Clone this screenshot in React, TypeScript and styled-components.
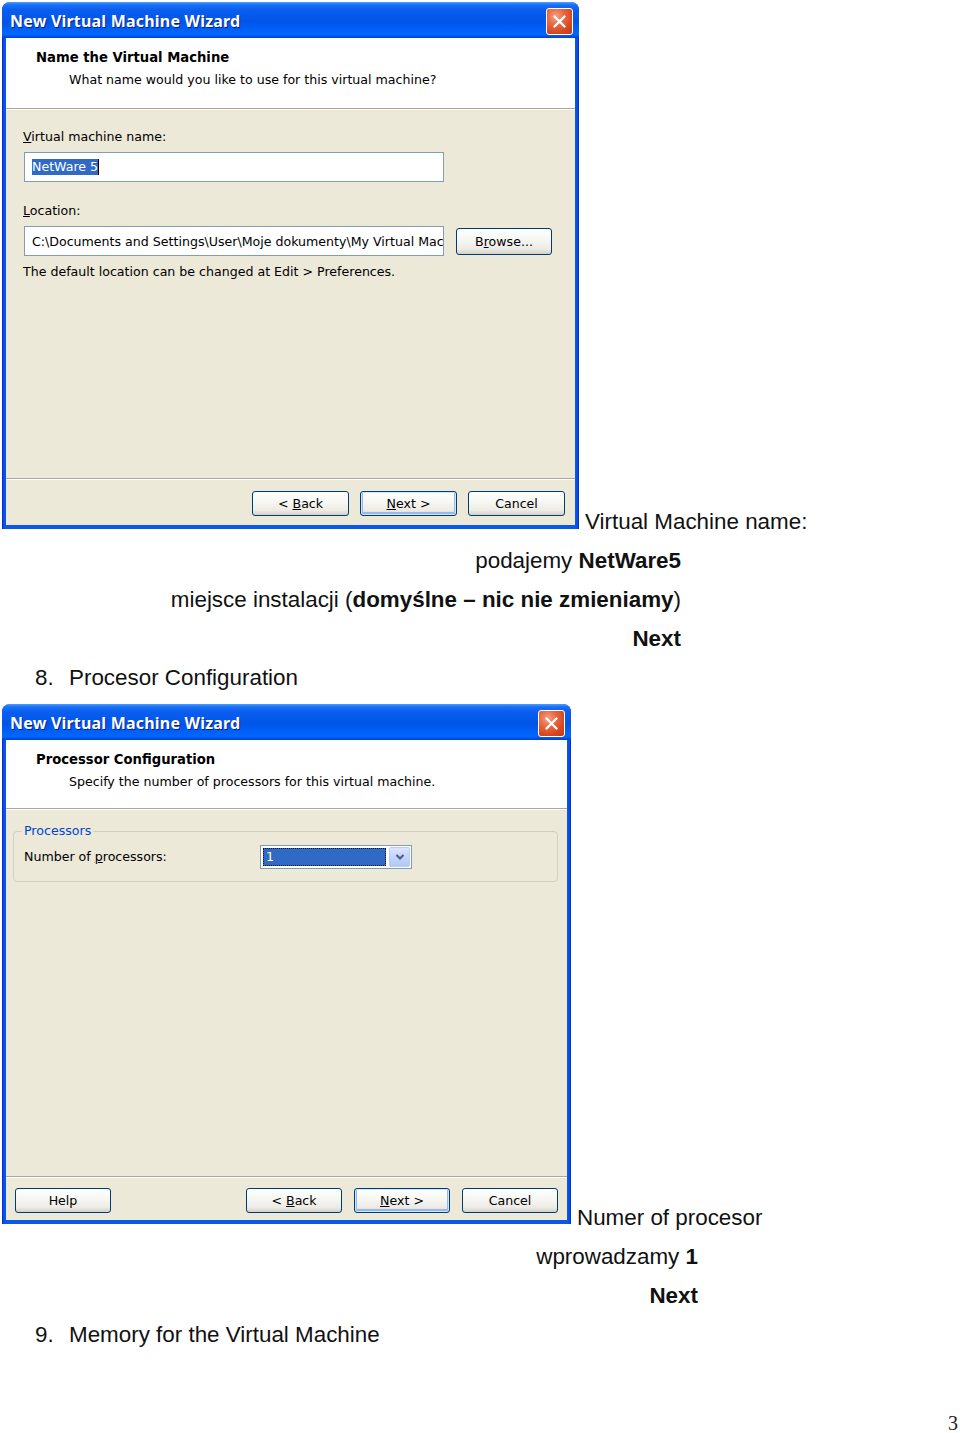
import React from 'react';
import styled, { createGlobalStyle } from 'styled-components';

const Global = createGlobalStyle`
  html, body { margin: 0; padding: 0; background: #ffffff; }
  body { font-family: "Liberation Sans", Arial, sans-serif; color: #111; }
`;

const Page = styled.div`
  width: 960px;
  height: 1433px;
  overflow: hidden;
  display: flex;
  flex-direction: column;
`;

const ShotRow = styled.div<{ $top: number }>`
  display: flex;
  align-items: flex-end;
  margin-top: ${p => p.$top}px;
  padding-left: 2px;
`;

const Caption = styled.div<{ $drop: number }>`
  font-size: 22.4px;
  line-height: 26px;
  margin-left: 6px;
  margin-bottom: -${p => p.$drop}px;
  white-space: nowrap;
`;

const NoteBlock = styled.div<{ $width: number; $top: number }>`
  width: ${p => p.$width}px;
  margin-top: ${p => p.$top}px;
  text-align: right;
`;

const NoteLine = styled.div`
  font-size: 22.4px;
  line-height: 39px;
  white-space: nowrap;
`;

const Step = styled.div`
  display: flex;
  padding-left: 35px;
  font-size: 22.4px;
  line-height: 39px;
  white-space: nowrap;
`;

const StepNum = styled.span`
  width: 34px;
`;

const PageNum = styled.div`
  margin-top: auto;
  margin-bottom: -2px;
  text-align: right;
  padding-right: 2px;
  font-family: "Liberation Serif", "Times New Roman", serif;
  font-size: 20px;
  line-height: 24px;
  color: #222;
`;

/* ---------- XP window ---------- */

const Window = styled.div<{ $w: number; $h: number }>`
  width: ${p => p.$w}px;
  height: ${p => p.$h}px;
  flex: none;
  display: flex;
  flex-direction: column;
  box-sizing: border-box;
  border-radius: 8px 8px 0 0;
  overflow: hidden;
  background: linear-gradient(90deg, #0019cf 0px, #0846e4 1px, #0a57ea 3px, #0a57ea calc(100% - 3px), #0846e4 calc(100% - 1px), #0019cf 100%);
  font-family: "DejaVu Sans", Verdana, sans-serif;
  font-size: 12.6px;
  color: #000;
`;

const TitleBar = styled.div<{ $h: number }>`
  height: ${p => p.$h}px;
  flex: none;
  display: flex;
  align-items: center;
  justify-content: space-between;
  padding: 2px 6px 0 8px;
  box-sizing: border-box;
  background: linear-gradient(180deg, #4aa0ff 0%, #1a6ff6 8%, #0a5eef 22%, #0055e8 55%, #0063fb 82%, #0068ff 90%, #0050e2 96%, #003dd0 100%);
`;

const TitleText = styled.span`
  color: #fff;
  font-family: "Noto Sans", "DejaVu Sans", sans-serif;
  font-weight: bold;
  font-size: 16px;
  letter-spacing: 0.2px;
  text-shadow: 1px 1px 0 #0a1e8c;
`;

const CloseButton = styled.div`
  width: 27px;
  height: 27px;
  box-sizing: border-box;
  border: 1px solid #ffffff;
  border-radius: 3px;
  display: flex;
  align-items: center;
  justify-content: center;
  background: radial-gradient(circle at 35% 30%, #f7a285 0%, #e86a43 35%, #d4461f 70%, #c1381a 100%);
`;

const Client = styled.div`
  flex: 1;
  margin: 0 4px 4px;
  display: flex;
  flex-direction: column;
  background: #ece9d8;
  min-height: 0;
`;

const Header = styled.div<{ $h: number }>`
  height: ${p => p.$h}px;
  flex: none;
  background: #ffffff;
  border-bottom: 1px solid #aca899;
  box-shadow: 0 1px 0 #ffffff;
  padding: 12px 0 0 30px;
  box-sizing: border-box;
`;

const HeaderTitle = styled.div`
  font-weight: bold;
  font-size: 13.2px;
  line-height: 16px;
`;

const HeaderSub = styled.div`
  margin-top: 6px;
  padding-left: 33px;
  line-height: 16px;
`;

const Body = styled.div<{ $pad: string }>`
  flex: 1;
  padding: ${p => p.$pad};
  display: flex;
  flex-direction: column;
`;

const FieldLabel = styled.div<{ $top: number }>`
  line-height: 16px;
  margin-top: ${p => p.$top}px;
`;

const FieldRow = styled.div`
  display: flex;
  align-items: center;
  gap: 12px;
  margin-top: 7px;
  margin-left: 1px;
`;

const TextBox = styled.div`
  width: 420px;
  height: 30px;
  box-sizing: border-box;
  border: 1px solid #7f9db9;
  background: #fff;
  display: flex;
  align-items: center;
  padding-left: 7px;
  white-space: nowrap;
  overflow: hidden;
`;

const Selected = styled.span`
  background: #316ac5;
  color: #fff;
  line-height: 16px;
`;

const Caret = styled.span`
  display: inline-block;
  width: 1px;
  height: 16px;
  background: #000;
`;

const HintText = styled.div`
  margin-top: 8px;
  line-height: 16px;
`;

const Footer = styled.div<{ $h: number; $pt: number; $side: number; $gap: number }>`
  height: ${p => p.$h}px;
  flex: none;
  box-sizing: border-box;
  border-top: 1px solid #aca899;
  box-shadow: inset 0 1px 0 #ffffff;
  padding: ${p => p.$pt}px ${p => p.$side}px 0;
  display: flex;
  align-items: flex-start;
  gap: ${p => p.$gap}px;
`;

const Spacer = styled.div`
  flex: 1;
`;

const Button = styled.div<{ $w: number; $h: number; $default?: boolean }>`
  width: ${p => p.$w}px;
  height: ${p => p.$h}px;
  flex: none;
  box-sizing: border-box;
  border: 1px solid #003c74;
  border-radius: 3px;
  display: flex;
  align-items: center;
  justify-content: center;
  padding-top: 1px;
  background: linear-gradient(180deg, #ffffff 0%, #f6f6f2 45%, #ecebe6 80%, #d6d0c5 100%);
  box-shadow: ${p => (p.$default ? 'inset 0 0 0 1px #cee7ff, inset 0 -1px 0 2px #98b8ea' : 'none')};
  line-height: 16px;
  white-space: nowrap;
`;

const ButtonText = styled.span`
  white-space: pre;
`;

const GroupBox = styled.fieldset`
  margin: 14px 0 0;
  padding: 6px 10px 12px 10px;
  border: 1px solid #d0d0bf;
  border-radius: 4px;
  min-width: 0;
`;

const Legend = styled.legend`
  color: #0046d5;
  padding: 0 2px;
  margin-left: -2px;
  line-height: 16px;
`;

const GroupRow = styled.div`
  display: flex;
  align-items: center;
`;

const GroupLabel = styled.div`
  width: 236px;
  line-height: 16px;
`;

const Combo = styled.div`
  width: 152px;
  height: 24px;
  box-sizing: border-box;
  border: 1px solid #7f9db9;
  background: #fff;
  display: flex;
  align-items: stretch;
  padding: 1px;
  gap: 2px;
`;

const ComboValue = styled.div`
  flex: 1;
  margin: 1px;
  background: #316ac5;
  color: #fff;
  border: 1px dotted #111;
  display: flex;
  align-items: center;
  padding-left: 2px;
  line-height: 14px;
`;

const ComboArrow = styled.div`
  width: 21px;
  flex: none;
  border-radius: 2px;
  border: 1px solid #bccbf1;
  box-sizing: border-box;
  background: linear-gradient(180deg, #dce6fd 0%, #c3d3fd 50%, #b3c8f6 100%);
  display: flex;
  align-items: center;
  justify-content: center;
`;

const CloseIcon = () => (
  <svg width="15" height="15" viewBox="0 0 15 15">
    <path d="M2.5 2.5 L12.5 12.5 M12.5 2.5 L2.5 12.5" stroke="#fff" strokeWidth="2.4" strokeLinecap="round" />
  </svg>
);

const ChevronIcon = () => (
  <svg width="10" height="8" viewBox="0 0 10 8">
    <path d="M1.5 2 L5 5.5 L8.5 2" stroke="#4d6185" strokeWidth="2.2" fill="none" />
  </svg>
);

const Titled = ({ h }: { h: number }) => (
  <TitleBar $h={h}>
    <TitleText>New Virtual Machine Wizard</TitleText>
    <CloseButton>
      <CloseIcon />
    </CloseButton>
  </TitleBar>
);

const BackLabel = () => (
  <ButtonText>
    {'< '}
    <u>B</u>ack
  </ButtonText>
);

const NextLabel = () => (
  <ButtonText>
    <u>N</u>
    {'ext >'}
  </ButtonText>
);

const NameDialog = () => (
  <Window $w={577} $h={527}>
    <Titled h={36} />
    <Client>
      <Header $h={71}>
        <HeaderTitle>Name the Virtual Machine</HeaderTitle>
        <HeaderSub>What name would you like to use for this virtual machine?</HeaderSub>
      </Header>
      <Body $pad="0 0 0 17px">
        <FieldLabel $top={20}>
          <u>V</u>irtual machine name:
        </FieldLabel>
        <FieldRow>
          <TextBox>
            <Selected>NetWare 5</Selected>
            <Caret />
          </TextBox>
        </FieldRow>
        <FieldLabel $top={21}>
          <u>L</u>ocation:
        </FieldLabel>
        <FieldRow>
          <TextBox>{'C:\\Documents and Settings\\User\\Moje dokumenty\\My Virtual Machines\\NetWare 5'}</TextBox>
          <Button $w={96} $h={27}>
            <ButtonText>
              B<u>r</u>owse...
            </ButtonText>
          </Button>
        </FieldRow>
        <HintText>The default location can be changed at Edit &gt; Preferences.</HintText>
      </Body>
      <Footer $h={47} $pt={12} $side={10} $gap={11}>
        <Spacer />
        <Button $w={97} $h={25}>
          <BackLabel />
        </Button>
        <Button $w={97} $h={25} $default>
          <NextLabel />
        </Button>
        <Button $w={97} $h={25}>
          <ButtonText>Cancel</ButtonText>
        </Button>
      </Footer>
    </Client>
  </Window>
);

const ProcessorDialog = () => (
  <Window $w={569} $h={520}>
    <Titled h={36} />
    <Client>
      <Header $h={69}>
        <HeaderTitle>Processor Configuration</HeaderTitle>
        <HeaderSub>Specify the number of processors for this virtual machine.</HeaderSub>
      </Header>
      <Body $pad="0 9px 0 7px">
        <GroupBox>
          <Legend>Processors</Legend>
          <GroupRow>
            <GroupLabel>
              Number of <u>p</u>rocessors:
            </GroupLabel>
            <Combo>
              <ComboValue>1</ComboValue>
              <ComboArrow>
                <ChevronIcon />
              </ComboArrow>
            </Combo>
          </GroupRow>
        </GroupBox>
      </Body>
      <Footer $h={44} $pt={11} $side={9} $gap={12}>
        <Button $w={96} $h={25}>
          <ButtonText>Help</ButtonText>
        </Button>
        <Spacer />
        <Button $w={96} $h={25}>
          <BackLabel />
        </Button>
        <Button $w={96} $h={25} $default>
          <NextLabel />
        </Button>
        <Button $w={96} $h={25}>
          <ButtonText>Cancel</ButtonText>
        </Button>
      </Footer>
    </Client>
  </Window>
);

export default function App() {
  return (
    <>
      <Global />
      <Page>
        <ShotRow $top={2}>
          <NameDialog />
          <Caption $drop={6}>Virtual Machine name:</Caption>
        </ShotRow>
        <NoteBlock $width={681} $top={12}>
          <NoteLine>
            podajemy <b>NetWare5</b>
          </NoteLine>
          <NoteLine>
            miejsce instalacji (<b>domyślne – nic nie zmieniamy</b>)
          </NoteLine>
          <NoteLine>
            <b>Next</b>
          </NoteLine>
        </NoteBlock>
        <Step>
          <StepNum>8.</StepNum>
          <span>Procesor Configuration</span>
        </Step>
        <ShotRow $top={7}>
          <ProcessorDialog />
          <Caption $drop={7}>Numer of procesor</Caption>
        </ShotRow>
        <NoteBlock $width={698} $top={13}>
          <NoteLine>
            wprowadzamy <b>1</b>
          </NoteLine>
          <NoteLine>
            <b>Next</b>
          </NoteLine>
        </NoteBlock>
        <Step>
          <StepNum>9.</StepNum>
          <span>Memory for the Virtual Machine</span>
        </Step>
        <PageNum>3</PageNum>
      </Page>
    </>
  );
}
